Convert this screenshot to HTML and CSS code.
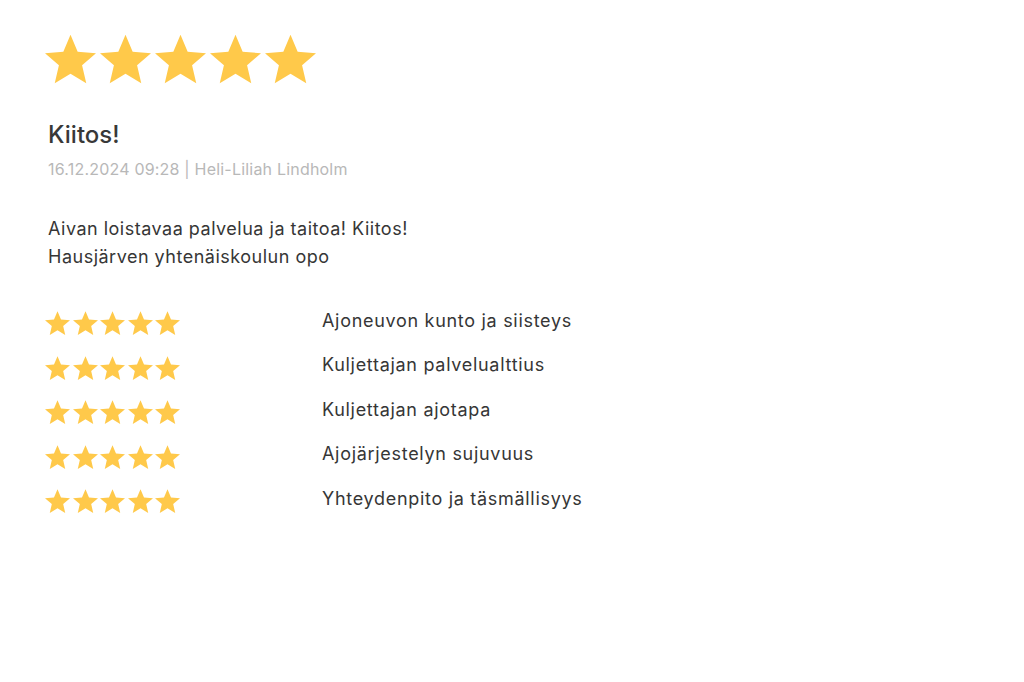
FILE: index.html
```html
<!DOCTYPE html>
<html lang="fi">
<head>
  <meta charset="UTF-8">
  <title>Arvostelu</title>
  <link rel="stylesheet" href="styles.css">
</head>
<body>
  <svg width="0" height="0" class="defs">
    <symbol id="star" viewBox="2 2 20 19">
      <path d="M12 17.27L18.18 21l-1.64-7.03L22 9.24l-7.19-.61L12 2 9.19 8.63 2 9.24l5.46 4.73L5.82 21z"/>
    </symbol>
  </svg>

  <div class="review">
    <div class="stars big">
      <svg><use href="#star"/></svg>
      <svg><use href="#star"/></svg>
      <svg><use href="#star"/></svg>
      <svg><use href="#star"/></svg>
      <svg><use href="#star"/></svg>
    </div>

    <h2 class="title">Kiitos!</h2>
    <div class="meta">16.12.2024 09:28 | Heli-Liliah Lindholm</div>

    <p class="text">Aivan loistavaa palvelua ja taitoa! Kiitos!<br>Hausjärven yhtenäiskoulun opo</p>

    <div class="ratings">
      <div class="row">
        <div class="stars small">
          <svg><use href="#star"/></svg><svg><use href="#star"/></svg><svg><use href="#star"/></svg><svg><use href="#star"/></svg><svg><use href="#star"/></svg>
        </div>
        <span class="label">Ajoneuvon kunto ja siisteys</span>
      </div>
      <div class="row">
        <div class="stars small">
          <svg><use href="#star"/></svg><svg><use href="#star"/></svg><svg><use href="#star"/></svg><svg><use href="#star"/></svg><svg><use href="#star"/></svg>
        </div>
        <span class="label">Kuljettajan palvelualttius</span>
      </div>
      <div class="row">
        <div class="stars small">
          <svg><use href="#star"/></svg><svg><use href="#star"/></svg><svg><use href="#star"/></svg><svg><use href="#star"/></svg><svg><use href="#star"/></svg>
        </div>
        <span class="label">Kuljettajan ajotapa</span>
      </div>
      <div class="row">
        <div class="stars small">
          <svg><use href="#star"/></svg><svg><use href="#star"/></svg><svg><use href="#star"/></svg><svg><use href="#star"/></svg><svg><use href="#star"/></svg>
        </div>
        <span class="label">Ajojärjestelyn sujuvuus</span>
      </div>
      <div class="row">
        <div class="stars small">
          <svg><use href="#star"/></svg><svg><use href="#star"/></svg><svg><use href="#star"/></svg><svg><use href="#star"/></svg><svg><use href="#star"/></svg>
        </div>
        <span class="label">Yhteydenpito ja täsmällisyys</span>
      </div>
    </div>
  </div>
</body>
</html>
```

FILE: styles.css
```css
body {
  margin: 0;
  font-family: Inter, "Noto Sans", sans-serif;
  background-color: #fff;
  color: #333;
}

.defs {
  position: absolute;
}

.review {
  padding: 34px 0 0 45px;
}

.stars {
  display: flex;
  fill: #ffc94a;
}

.stars.big {
  gap: 4px;
}

.stars.big svg {
  width: 51px;
  height: 50px;
}

.title {
  margin: 36px 0 0 3px;
  font-size: 24px;
  font-weight: 500;
  letter-spacing: 0;
  color: #383838;
}

.meta {
  margin: 10px 0 0 3px;
  font-size: 16px;
  color: #b8b8b8;
  letter-spacing: 0.2px;
}

.text {
  margin: 36px 0 0 3px;
  font-size: 18px;
  line-height: 28px;
  letter-spacing: 0.5px;
  color: #363636;
}

.ratings {
  margin-top: 39px;
  display: flex;
  flex-direction: column;
  gap: 18.5px;
}

.row {
  display: flex;
  align-items: center;
  height: 26px;
}

.stars.small {
  width: 277px;
  gap: 2.5px;
}

.stars.small svg {
  width: 25px;
  height: 26px;
}

.label {
  font-size: 18px;
  letter-spacing: 0.7px;
  color: #363636;
  margin-top: -6px;
}
```
